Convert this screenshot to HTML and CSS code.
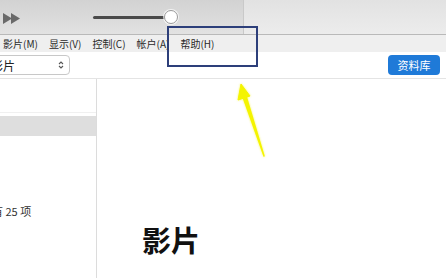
FILE: index.html
```html
<!DOCTYPE html>
<html lang="zh">
<head>
<meta charset="utf-8">
<link rel="stylesheet" href="styles.css">
</head>
<body>
<div class="app">
  <header class="toolbar">
    <div class="toolbar-left">
      <svg class="ff" width="18" height="11" viewBox="0 0 18 11"><polygon points="0,0 9,5.5 0,11" fill="#6a6a6a"/><polygon points="8,0 17,5.5 8,11" fill="#6a6a6a"/></svg>
      <div class="slider">
        <div class="track"></div>
        <div class="thumb"></div>
      </div>
    </div>
    <div class="toolbar-right"></div>
  </header>
  <nav class="menubar">
    <span class="menu-item">影片(M)</span>
    <span class="menu-item">显示(V)</span>
    <span class="menu-item">控制(C)</span>
    <span class="menu-item">帐户(A)</span>
    <span class="menu-item">帮助(H)</span>
  </nav>
  <div class="controls">
    <div class="select">
      <span class="select-text">影片</span>
      <span class="chev">
        <svg width="6" height="10" viewBox="0 0 6 10"><path d="M1 4 L3 2 L5 4 M1 6 L3 8 L5 6" fill="none" stroke="#555" stroke-width="1.1"/></svg>
      </span>
    </div>
    <button class="lib-btn">资料库</button>
  </div>
  <div class="body">
    <aside class="sidebar">
      <div class="side-gap"></div>
      <div class="side-row selected"></div>
      <div class="count">共有 25 项</div>
    </aside>
    <main class="content">
      <h1 class="title">影片</h1>
    </main>
  </div>
  <div class="highlight"></div>
  <svg class="arrow" width="446" height="278" viewBox="0 0 446 278">
    <path d="M264 156 L246 96 L243 97 Z" fill="#f4f400" stroke="#f4f400" stroke-width="1.5" stroke-linejoin="round"/>
    <polygon points="241,84 238,100 250,96" fill="#f4f400" stroke="#f4f400" stroke-width="1" stroke-linejoin="round"/>
  </svg>
</div>
</body>
</html>
```
FILE: styles.css
```css
* { box-sizing: border-box; }
html, body { margin: 0; padding: 0; }
body {
  width: 446px;
  height: 278px;
  overflow: hidden;
  background: #fff;
  font-family: "Noto Sans CJK SC", "Noto Sans", sans-serif;
  color: #222;
}
.app {
  position: relative;
  width: 446px;
  height: 278px;
  display: flex;
  flex-direction: column;
  overflow: hidden;
}
.toolbar {
  height: 35px;
  display: flex;
  border-bottom: 1px solid #b9b9b9;
  flex: none;
}
.toolbar-left {
  width: 244px;
  display: flex;
  align-items: center;
  padding-left: 3px;
  background: linear-gradient(#d2d2d2, #e2e2e2);
  border-right: 1px solid #c9c9c9;
}
.toolbar-right {
  flex: 1;
  background: linear-gradient(#e2e2e2, #ececec);
}
.ff { flex: none; margin-top: 2px; }
.slider {
  position: relative;
  margin-left: 72px;
  width: 86px;
  height: 14px;
  display: flex;
  align-items: center;
}
.track {
  width: 78px;
  height: 3px;
  background: #4a4a4a;
  border-radius: 2px;
}
.thumb {
  position: absolute;
  left: 71px;
  top: 0;
  width: 14px;
  height: 14px;
  border-radius: 50%;
  background: #fff;
  border: 1px solid #9a9a9a;
  box-shadow: 0 0 0 1px rgba(255,255,255,0.7);
}
.menubar {
  height: 17px;
  display: flex;
  align-items: center;
  gap: 11px;
  padding-left: 3px;
  background: #efefef;
  font-size: 10px;
  line-height: 1;
  color: #2a2a2a;
  flex: none;
}
.controls {
  height: 27px;
  display: flex;
  align-items: center;
  justify-content: space-between;
  padding-right: 6px;
  background: #fff;
  border-bottom: 1px solid #e4e4e4;
  flex: none;
}
.select {
  margin-left: -12px;
  width: 82px;
  height: 20px;
  border: 1px solid #c8c8c8;
  border-radius: 4px;
  display: flex;
  align-items: center;
  justify-content: space-between;
  padding: 0 5px 0 2px;
  font-size: 12px;
  color: #222;
}
.chev { display: flex; }
.lib-btn {
  width: 52px;
  height: 20px;
  border: none;
  border-radius: 4px;
  background: #1f7ad8;
  color: #fff;
  font-family: "Noto Sans CJK SC", sans-serif;
  font-size: 11px;
  padding: 0;
  line-height: 20px;
}
.body {
  flex: 1;
  display: flex;
}
.sidebar {
  width: 97px;
  border-right: 1px solid #dcdcdc;
  flex: none;
  display: flex;
  flex-direction: column;
}
.side-gap {
  height: 34px;
  border-bottom: 1px solid #f0f0f0;
}
.side-row {
  height: 20px;
  margin-top: 3px;
}
.side-row.selected { background: #dedede; }
.count {
  margin-top: 67px;
  margin-left: -19px;
  font-size: 11px;
  color: #333;
  white-space: nowrap;
}
.content {
  flex: 1;
  padding: 146px 0 0 45px;
}
.title {
  margin: 0;
  font-size: 29px;
  font-weight: 700;
  line-height: 1;
  color: #111;
}
.highlight {
  position: absolute;
  left: 167px;
  top: 26px;
  width: 91px;
  height: 41px;
  border: 2px solid #2d3f7a;
}
.arrow {
  position: absolute;
  left: 0;
  top: 0;
  pointer-events: none;
  filter: drop-shadow(0 0 1px rgba(240,240,0,0.6));
}
```
